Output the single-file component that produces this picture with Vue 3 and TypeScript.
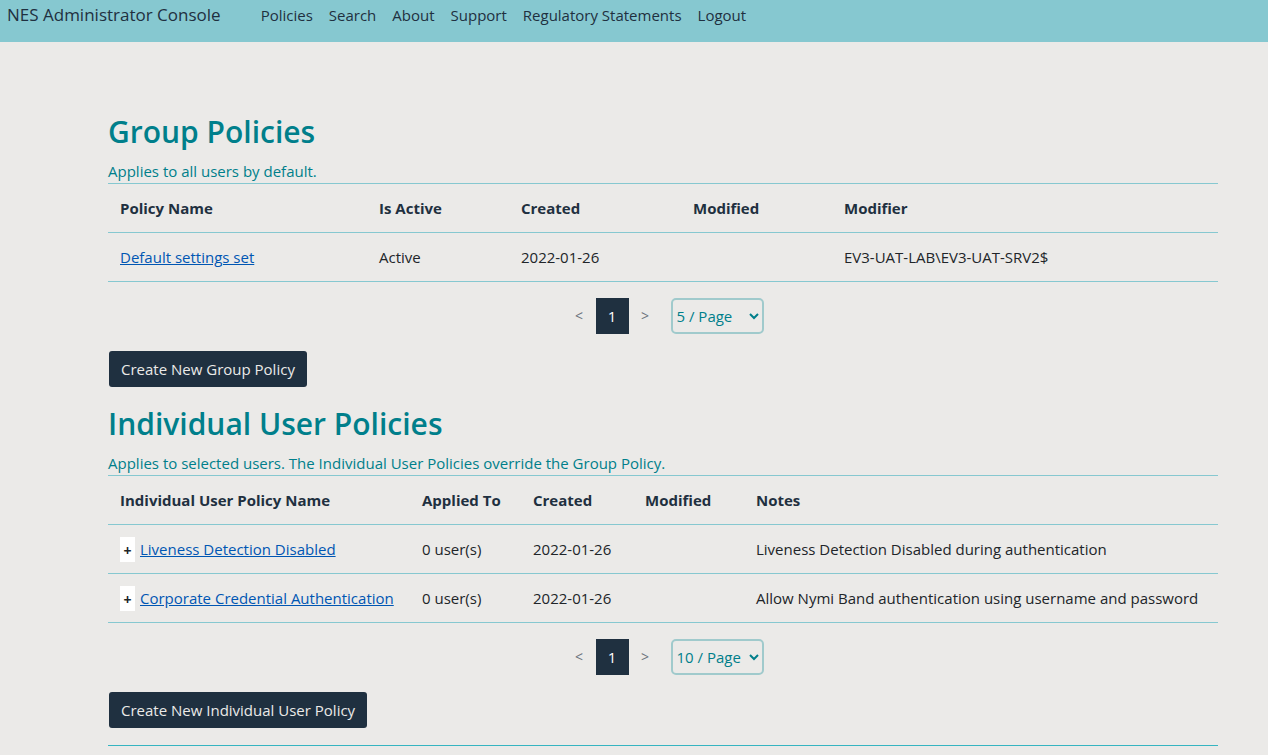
<script setup lang="ts">
import { ref } from 'vue'

interface Column {
  label: string
  width: number
}

const navLinks: string[] = ['Policies', 'Search', 'About', 'Support', 'Regulatory Statements', 'Logout']

const groupColumns: Column[] = [
  { label: 'Policy Name', width: 259 },
  { label: 'Is Active', width: 142 },
  { label: 'Created', width: 172 },
  { label: 'Modified', width: 151 },
  { label: 'Modifier', width: 386 },
]
const groupPolicies = [
  { name: 'Default settings set', active: 'Active', created: '2022-01-26', modified: '', modifier: 'EV3-UAT-LAB\\EV3-UAT-SRV2$' },
]

const userColumns: Column[] = [
  { label: 'Individual User Policy Name', width: 302 },
  { label: 'Applied To', width: 111 },
  { label: 'Created', width: 112 },
  { label: 'Modified', width: 111 },
  { label: 'Notes', width: 474 },
]
const userPolicies = [
  { name: 'Liveness Detection Disabled', applied: '0 user(s)', created: '2022-01-26', modified: '', notes: 'Liveness Detection Disabled during authentication' },
  { name: 'Corporate Credential Authentication', applied: '0 user(s)', created: '2022-01-26', modified: '', notes: 'Allow Nymi Band authentication using username and password' },
]

const pageSizes: number[] = [5, 10, 25]
const groupPageSize = ref(5)
const userPageSize = ref(10)

function share(columns: Column[], column: Column): string {
  const total = columns.reduce((sum, c) => sum + c.width, 0)
  return `${(column.width / total) * 100}%`
}
</script>

<template>
  <div class="console">
    <header class="topbar">
      <a class="brand" href="#">NES Administrator Console</a>
      <nav class="nav">
        <a v-for="link in navLinks" :key="link" href="#">{{ link }}</a>
      </nav>
    </header>

    <main class="content">
      <section>
        <h2>Group Policies</h2>
        <p class="lead">Applies to all users by default.</p>
        <table>
          <colgroup>
            <col v-for="c in groupColumns" :key="c.label" :style="{ width: share(groupColumns, c) }" />
          </colgroup>
          <thead>
            <tr>
              <th v-for="c in groupColumns" :key="c.label" scope="col">{{ c.label }}</th>
            </tr>
          </thead>
          <tbody>
            <tr v-for="p in groupPolicies" :key="p.name">
              <td><a class="link" href="#">{{ p.name }}</a></td>
              <td>{{ p.active }}</td>
              <td>{{ p.created }}</td>
              <td>{{ p.modified }}</td>
              <td>{{ p.modifier }}</td>
            </tr>
          </tbody>
        </table>
        <div class="pager">
          <button class="step" type="button" aria-label="Previous page">&lt;</button>
          <button class="current" type="button" aria-current="page">1</button>
          <button class="step" type="button" aria-label="Next page">&gt;</button>
          <select v-model="groupPageSize" aria-label="Group policies per page">
            <option v-for="n in pageSizes" :key="n" :value="n">{{ n }} / Page</option>
          </select>
        </div>
        <button class="create" type="button">Create New Group Policy</button>
      </section>

      <section>
        <h2>Individual User Policies</h2>
        <p class="lead">Applies to selected users. The Individual User Policies override the Group Policy.</p>
        <table>
          <colgroup>
            <col v-for="c in userColumns" :key="c.label" :style="{ width: share(userColumns, c) }" />
          </colgroup>
          <thead>
            <tr>
              <th v-for="c in userColumns" :key="c.label" scope="col">{{ c.label }}</th>
            </tr>
          </thead>
          <tbody>
            <tr v-for="p in userPolicies" :key="p.name">
              <td>
                <div class="name">
                  <button class="expand" type="button" :aria-label="`Expand ${p.name}`">+</button>
                  <a class="link" href="#">{{ p.name }}</a>
                </div>
              </td>
              <td>{{ p.applied }}</td>
              <td>{{ p.created }}</td>
              <td>{{ p.modified }}</td>
              <td>{{ p.notes }}</td>
            </tr>
          </tbody>
        </table>
        <div class="pager">
          <button class="step" type="button" aria-label="Previous page">&lt;</button>
          <button class="current" type="button" aria-current="page">1</button>
          <button class="step" type="button" aria-label="Next page">&gt;</button>
          <select v-model="userPageSize" aria-label="User policies per page">
            <option v-for="n in pageSizes" :key="n" :value="n">{{ n }} / Page</option>
          </select>
        </div>
        <button class="create" type="button">Create New Individual User Policy</button>
      </section>
      <hr />
    </main>
  </div>
</template>

<style>
body {
  margin: 0;
  background: #ebeae8;
}
</style>

<style scoped>
.console {
  font-family: 'Segoe UI', 'Open Sans', 'Noto Sans', sans-serif;
  font-size: 15px;
  line-height: 24px;
  color: #212529;
}
.console *,
.console *::before {
  box-sizing: border-box;
}
button,
select {
  font: inherit;
}
.topbar {
  display: flex;
  height: 42px;
  padding: 0 7px;
  gap: 40px;
  line-height: 30px;
  background: #86c8d0;
}
.topbar a {
  color: #1f3040;
  text-decoration: none;
  white-space: nowrap;
}
.topbar .brand {
  font-size: 17px;
}
.nav {
  display: flex;
  gap: 16px;
}
.content {
  padding: 71px 50px 0 108px;
}
section + section {
  padding-top: 1px;
}
h2 {
  margin: 0 0 8px;
  font-size: 30px;
  font-weight: 600;
  line-height: 38px;
  color: #007f8b;
}
.lead {
  margin: 0;
  color: #007f8b;
}
table {
  width: 100%;
  table-layout: fixed;
  border-spacing: 0;
  border-bottom: 1px solid #86c8d0;
}
th,
td {
  height: 49px;
  padding: 0 0 0 12px;
  border-top: 1px solid #86c8d0;
  text-align: left;
  white-space: nowrap;
}
th {
  font-weight: 700;
  color: #1f3040;
}
.link {
  color: #0056b3;
  text-decoration: underline;
}
.name {
  display: flex;
  align-items: center;
  gap: 5px;
}
.expand {
  width: 15px;
  height: 25px;
  padding: 4px 0 0;
  border: 0;
  background: #fff;
  color: #212529;
  font-size: 14px;
  font-weight: 700;
  line-height: 20px;
}
.pager {
  display: flex;
  justify-content: center;
  margin: 16px 0 17px;
}
.pager button {
  width: 33px;
  height: 36px;
  padding: 0;
  border: 0;
}
.pager .step {
  background: none;
  color: #6c757d;
  font-size: 14px;
}
.pager .current {
  background: #1f3040;
  color: #fff;
}
.pager select {
  width: 93px;
  height: 36px;
  margin-left: 9px;
  padding: 0;
  border: 2px solid #a0cacc;
  border-radius: 5px;
  background-color: transparent;
  color: #007f8b;
}
.create {
  display: block;
  height: 36px;
  margin: 0 0 17px 1px;
  padding: 0 12px;
  border: 0;
  border-radius: 3px;
  background: #1f3040;
  color: #ebeae8;
}
hr {
  margin: 0;
  border: 0;
  border-top: 1px solid #35b5c1;
}
</style>
